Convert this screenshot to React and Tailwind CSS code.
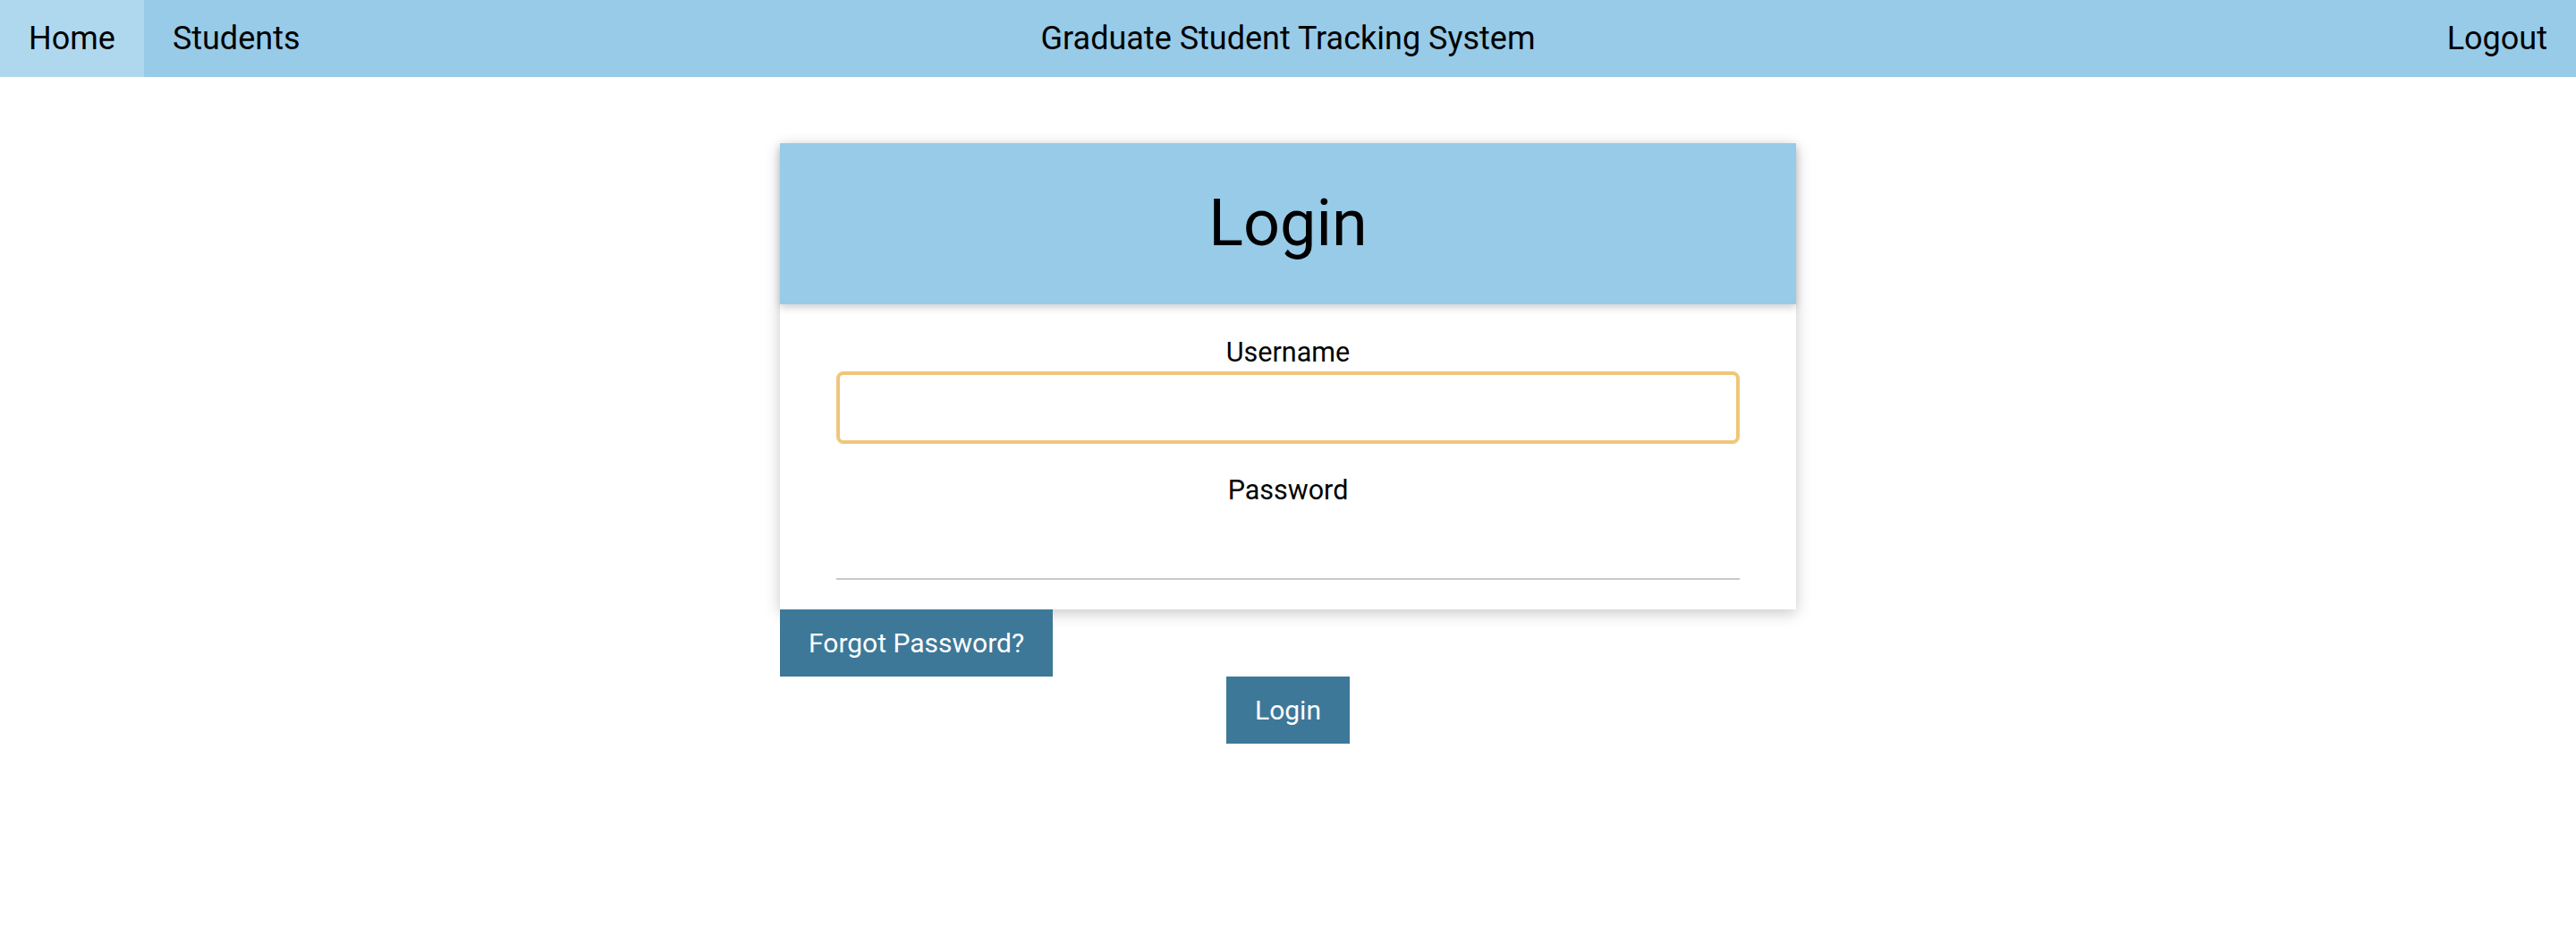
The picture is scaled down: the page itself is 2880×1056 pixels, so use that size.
import React from "react";

export default function App() {
  return (
    <div className="min-h-[1056px] w-full bg-white text-black" style={{ fontFamily: "Roboto, 'Liberation Sans', sans-serif" }}>
      <nav className="grid h-[86px] grid-cols-[1fr_auto_1fr] items-stretch bg-[#97cbe8] text-[36px] leading-[42px]">
        <div className="flex items-stretch">
          <a className="flex items-center bg-[#afd8ee] px-[32px]">Home</a>
          <a className="flex items-center px-[32px]">Students</a>
        </div>
        <div className="flex items-center">Graduate Student Tracking System</div>
        <div className="flex items-stretch justify-end">
          <a className="flex items-center px-[32px]">Logout</a>
        </div>
      </nav>

      <main className="flex flex-col items-center pt-[74px]">
        <div className="flex w-[1136px] flex-col">
          <div className="bg-white shadow-[0_4px_16px_rgba(0,0,0,0.22)]">
            <div className="relative z-10 flex h-[180px] items-center justify-center bg-[#97cbe8] shadow-[0_4px_8px_rgba(0,0,0,0.18)]">
              <h1 className="text-[72px] leading-[84px] font-normal">Login</h1>
            </div>
            <div className="flex flex-col px-[63px] pt-[36px] pb-[33px] text-[30.5px]">
              <label className="text-center leading-[36px]">Username</label>
              <input
                type="text"
                className="mt-[3px] h-[81px] w-full rounded-[8px] border-[4px] border-[#efc77a] bg-white px-[16px] text-[30px] outline-none"
              />
              <label className="mt-[34px] text-center leading-[36px]">Password</label>
              <input
                type="password"
                className="h-[82px] w-full border-0 border-b-[2px] border-[#c8c8c8] bg-white px-[16px] text-[30px] outline-none"
              />
            </div>
          </div>
          <div className="flex">
            <button className="h-[75px] bg-[#3d7899] px-[32px] text-[30px] text-white">Forgot Password?</button>
          </div>
          <div className="flex justify-center">
            <button className="h-[75px] bg-[#3d7899] px-[32px] text-[30px] text-white">Login</button>
          </div>
        </div>
      </main>
    </div>
  );
}
